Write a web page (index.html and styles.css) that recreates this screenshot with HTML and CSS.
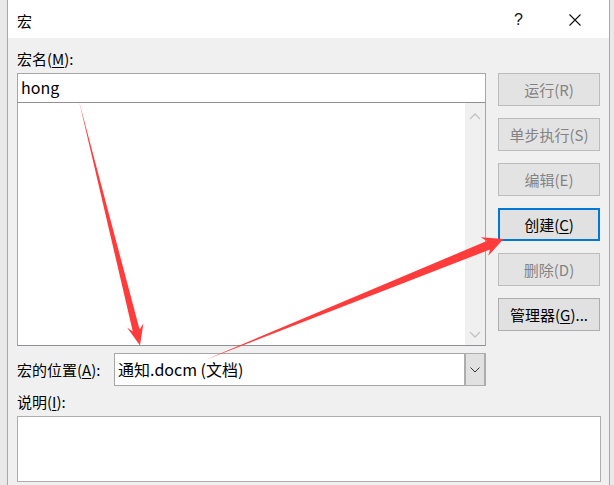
FILE: index.html
```html
<!DOCTYPE html>
<html lang="zh-CN">
<head>
<meta charset="utf-8">
<title>宏</title>
<link rel="stylesheet" href="styles.css">
</head>
<body>
<div class="dialog">
  <div class="titlebar">
    <span class="title">宏</span>
    <span class="tb-help">?</span>
    <span class="tb-close">
      <svg width="12" height="12" viewBox="0 0 12 12"><path d="M0.5 0.5 L11.5 11.5 M11.5 0.5 L0.5 11.5" stroke="#111" stroke-width="1.1" fill="none"/></svg>
    </span>
  </div>
  <div class="content">
    <div class="label name-label">宏名(<u>M</u>):</div>
    <div class="main">
      <div class="left">
        <div class="name-input">hong</div>
        <div class="list">
          <div class="list-body"></div>
          <div class="vscroll">
            <svg width="12" height="8" viewBox="0 0 12 8"><path d="M1 7 L6 2 L11 7" stroke="#c2c2c2" stroke-width="1.3" fill="none"/></svg>
            <svg width="12" height="8" viewBox="0 0 12 8"><path d="M1 1 L6 6 L11 1" stroke="#c2c2c2" stroke-width="1.3" fill="none"/></svg>
          </div>
        </div>
        <div class="loc-row">
          <span class="label loc-label">宏的位置(<u>A</u>):</span>
          <div class="combo">
            <span class="combo-text">通知.docm (文档)</span>
            <span class="combo-btn">
              <svg width="10" height="6" viewBox="0 0 10 6"><path d="M0.5 0.5 L5 5 L9.5 0.5" stroke="#333" stroke-width="1" fill="none"/></svg>
            </span>
          </div>
        </div>
      </div>
      <div class="buttons">
        <div class="btn disabled">运行(R)</div>
        <div class="btn disabled">单步执行(S)</div>
        <div class="btn disabled">编辑(E)</div>
        <div class="btn default">创建(<u>C</u>)</div>
        <div class="btn disabled">删除(D)</div>
        <div class="btn">管理器(<u>G</u>)...</div>
      </div>
    </div>
    <div class="label desc-label">说明(<u>I</u>):</div>
    <div class="desc"></div>
  </div>
</div>
<svg class="arrows" width="614" height="485" viewBox="0 0 614 485">
  <polygon fill="#ff3b3b" points="79,101 139.6,329.6 143.4,323.4 140,345.5 127.0,327.5 132.8,331.4"/>
  <polygon fill="#ff3b3b" points="205,360 490.0,249.5 488.3,255.7 503.5,239 480.7,237.3 486.8,241.0"/>
</svg>
</body>
</html>
```

FILE: styles.css
```css
* { box-sizing: border-box; }
html, body { margin: 0; padding: 0; }
body {
  width: 614px;
  height: 485px;
  overflow: hidden;
  background: #e9e9e9;
  font-family: "Noto Sans CJK SC", "Noto Sans", sans-serif;
  color: #000;
  position: relative;
}
u { text-decoration: underline; text-underline-offset: 2px; }

.dialog {
  margin-left: 7px;
  width: 603px;
  height: 485px;
  background: #f0f0f0;
  border-left: 1px solid #a8a8a8;
  border-right: 1px solid #a8a8a8;
}

.titlebar {
  height: 38px;
  background: #fff;
  display: flex;
  align-items: center;
  padding-left: 9px;
}
.title { font-size: 15px; line-height: 20px; flex: 1; margin-top: 3px; }
.tb-help { font-size: 16px; font-family: "Liberation Sans", sans-serif; width: 55px; margin-top: 1px; color: #111; }
.tb-close { width: 40px; display: flex; align-items: center; margin-top: 1px; }

.content { padding-left: 9px; }

.label { font-size: 15px; line-height: 20px; }
.name-label { height: 35px; padding-top: 11px; }

.main { display: flex; gap: 12px; }
.left { width: 469px; display: flex; flex-direction: column; }

.name-input {
  height: 29px;
  background: #fff;
  border: 1px solid #a6a6a6;
  border-bottom: none;
  font-size: 16px;
  line-height: 26px;
  padding-left: 3px;
}

.list {
  height: 244px;
  border: 1px solid #8d9096;
  border-right-color: #a6a6a6;
  border-left-color: #a6a6a6;
  display: flex;
  background: #fff;
}
.list-body { flex: 1; }
.vscroll {
  width: 20px;
  background: #f0f0f0;
  display: flex;
  flex-direction: column;
  justify-content: space-between;
  align-items: center;
  padding: 9px 0 6px;
}

.loc-row {
  margin-top: 7px;
  display: flex;
  align-items: center;
}
.loc-label { width: 97px; }
.combo {
  flex: 1;
  height: 33px;
  background: #fff;
  border: 1px solid #a6a6a6;
  display: flex;
}
.combo-text { flex: 1; font-size: 16px; line-height: 30px; padding-left: 3px; }
.combo-btn {
  width: 22px;
  background: #e1e1e1;
  border: 2px solid #adadad;
  border-top-width: 1px;
  border-bottom-width: 1px;
  margin: -1px -1px -1px 0;
  display: flex;
  align-items: center;
  justify-content: center;
}

.buttons {
  width: 102px;
  display: flex;
  flex-direction: column;
  gap: 12px;
}
.btn {
  height: 33px;
  background: #e1e1e1;
  border: 1px solid #adadad;
  font-size: 15px;
  line-height: 31px;
  text-align: center;
}
.btn.disabled { color: #838383; border-color: #bcbcbc; background: #e3e3e3; }
.btn.default { border: 2px solid #0078d7; line-height: 29px; }

.desc-label { height: 30px; padding-top: 6px; }
.desc {
  width: 584px;
  height: 66px;
  background: #fff;
  border: 1px solid #adadad;
}

.arrows { position: absolute; left: 0; top: 0; pointer-events: none; }
```
